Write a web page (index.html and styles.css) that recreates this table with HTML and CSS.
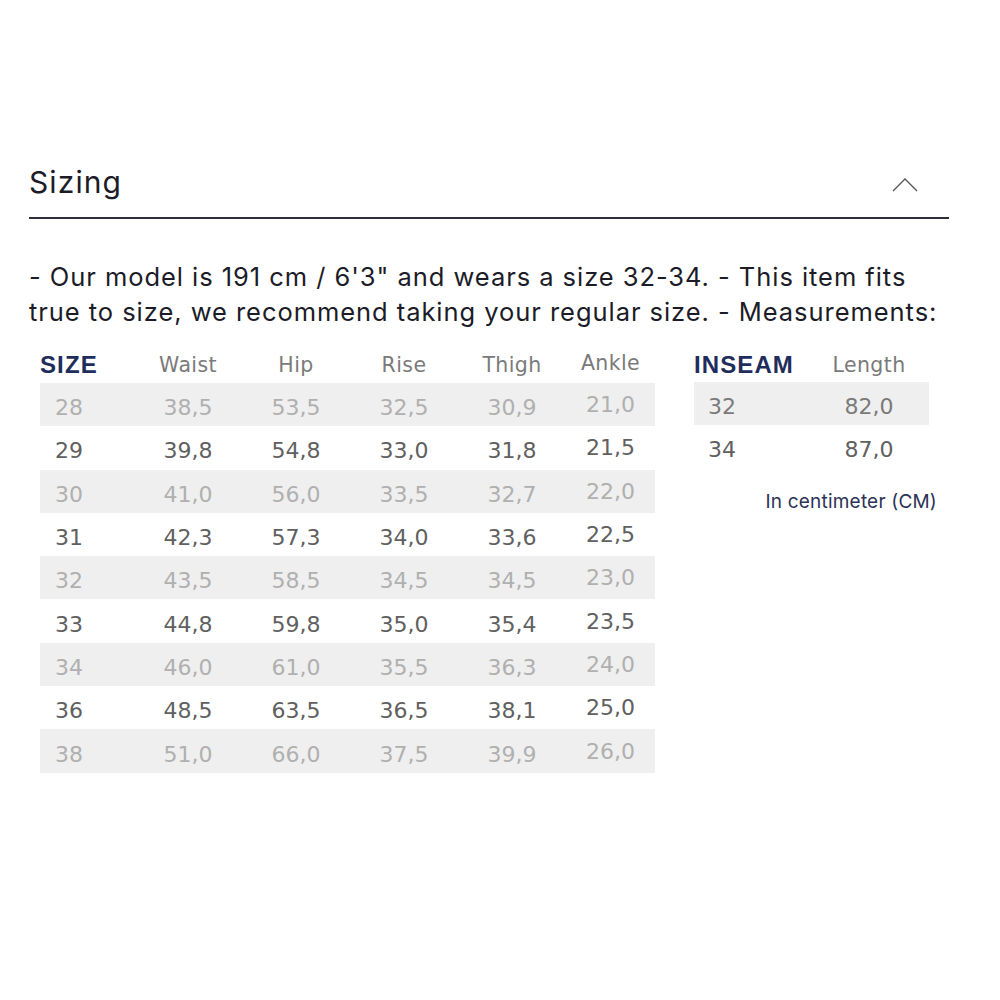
FILE: index.html
```html
<!DOCTYPE html>
<html>
<head>
<meta charset="utf-8">
<link rel="stylesheet" href="styles.css">
</head>
<body>
<div class="panel">
  <div class="acc-head">
    <h2 class="acc-title">Sizing</h2>
    <svg class="chevron" width="26" height="14" viewBox="0 0 26 14"><path d="M1 13 L13 1 L25 13" fill="none" stroke="#555" stroke-width="1.4"/></svg>
  </div>
  <p class="desc">- Our model is 191 cm / 6'3" and wears a size 32-34. - This item fits true to size, we recommend taking your regular size. - Measurements:</p>
  <div class="charts">
    <div class="chart main">
      <div class="row head"><span class="c first brand">SIZE</span><span class="c">Waist</span><span class="c">Hip</span><span class="c">Rise</span><span class="c">Thigh</span><span class="c up">Ankle</span></div>
      <div class="row odd"><span class="c first">28</span><span class="c">38,5</span><span class="c">53,5</span><span class="c">32,5</span><span class="c">30,9</span><span class="c up">21,0</span></div>
      <div class="row even"><span class="c first">29</span><span class="c">39,8</span><span class="c">54,8</span><span class="c">33,0</span><span class="c">31,8</span><span class="c up">21,5</span></div>
      <div class="row odd"><span class="c first">30</span><span class="c">41,0</span><span class="c">56,0</span><span class="c">33,5</span><span class="c">32,7</span><span class="c up">22,0</span></div>
      <div class="row even"><span class="c first">31</span><span class="c">42,3</span><span class="c">57,3</span><span class="c">34,0</span><span class="c">33,6</span><span class="c up">22,5</span></div>
      <div class="row odd"><span class="c first">32</span><span class="c">43,5</span><span class="c">58,5</span><span class="c">34,5</span><span class="c">34,5</span><span class="c up">23,0</span></div>
      <div class="row even"><span class="c first">33</span><span class="c">44,8</span><span class="c">59,8</span><span class="c">35,0</span><span class="c">35,4</span><span class="c up">23,5</span></div>
      <div class="row odd"><span class="c first">34</span><span class="c">46,0</span><span class="c">61,0</span><span class="c">35,5</span><span class="c">36,3</span><span class="c up">24,0</span></div>
      <div class="row even"><span class="c first">36</span><span class="c">48,5</span><span class="c">63,5</span><span class="c">36,5</span><span class="c">38,1</span><span class="c up">25,0</span></div>
      <div class="row odd"><span class="c first">38</span><span class="c">51,0</span><span class="c">66,0</span><span class="c">37,5</span><span class="c">39,9</span><span class="c up">26,0</span></div>
    </div>
    <div class="side">
      <div class="chart inseam">
        <div class="row head"><span class="c first brand">INSEAM</span><span class="c">Length</span></div>
        <div class="row odd mid"><span class="c first">32</span><span class="c">82,0</span></div>
        <div class="row even mid"><span class="c first">34</span><span class="c">87,0</span></div>
      </div>
      <p class="unit">In centimeter (CM)</p>
    </div>
  </div>
</div>
</body>
</html>
```

FILE: styles.css
```css
html, body {
  margin: 0;
  padding: 0;
  background: #ffffff;
}

.panel {
  width: 920px;
  margin-left: 29px;
  padding-top: 160px;
  font-family: "Inter", "Noto Sans", sans-serif;
  color: #1c1c28;
}

.acc-head {
  display: flex;
  align-items: center;
  justify-content: space-between;
  height: 57px;
  border-bottom: 2px solid #2e2e3c;
}

.acc-title {
  margin: 0 0 14px 0;
  font-size: 30px;
  font-weight: 400;
  letter-spacing: 1.1px;
}

.chevron {
  margin-right: 31px;
  margin-bottom: 8px;
}

.desc {
  margin: 40px 0 0 0;
  font-size: 25.5px;
  line-height: 35px;
  letter-spacing: 0.95px;
}

.charts {
  display: flex;
  margin-top: 14px;
}

.chart {
  font-family: "DejaVu Sans", sans-serif;
}

.main {
  margin-left: 11px;
  width: 615px;
}

.row {
  display: grid;
  grid-template-columns: 94px 108px 108px 108px 108px 89px;
  align-items: center;
  height: 43.3px;
  font-size: 22px;
}

.row.head {
  height: 40px;
  color: #7a7a7a;
  font-size: 20.5px;
  letter-spacing: 0.4px;
}

.row.odd {
  background: #efefef;
  color: #b0b0b0;
}

.row.even {
  color: #606060;
}

.c {
  text-align: center;
  position: relative;
  top: 3px;
}

.row.head .c {
  top: 2px;
}

.c.first {
  text-align: left;
  padding-left: 15px;
}

.row .c.up {
  top: 0;
}

.row.head .c.first {
  padding-left: 0;
}

.brand {
  font-family: "Liberation Sans", Arial, sans-serif;
  font-weight: 700;
  color: #1f2d5c;
  font-size: 24px;
  letter-spacing: 1.1px;
}

.side {
  margin-left: 39px;
  width: 241px;
  display: flex;
  flex-direction: column;
}

.inseam {
  width: 235px;
}

.inseam .row {
  grid-template-columns: 115px 120px;
}

.inseam .row.head {
  height: 39px;
}

.inseam .row.mid.odd {
  color: #7a7a7a;
}

.inseam .c.first {
  padding-left: 14px;
}

.inseam .row.head .c.first {
  padding-left: 0;
}

.unit {
  margin: 21px 0 0 0;
  text-align: right;
  font-size: 19px;
  letter-spacing: 0.2px;
  color: #2b3256;
  font-family: "Inter", "Noto Sans", sans-serif;
  margin-right: -2px;
}
```
